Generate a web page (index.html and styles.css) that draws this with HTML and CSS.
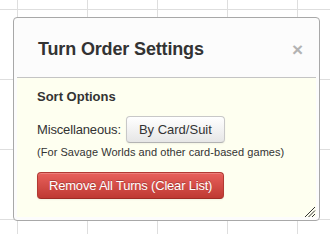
FILE: index.html
```html
<!DOCTYPE html>
<html>
<head>
<meta charset="utf-8">
<link rel="stylesheet" href="styles.css">
</head>
<body>
<div class="canvas">
  <div class="dialog">
    <div class="titlebar">
      <span class="title">Turn Order Settings</span>
      <span class="close">×</span>
    </div>
    <div class="content">
      <div class="section-title">Sort Options</div>
      <div class="row">
        <span class="label">Miscellaneous:</span>
        <button class="btn">By Card/Suit</button>
      </div>
      <div class="note">(For Savage Worlds and other card-based games)</div>
      <button class="btn btn-danger">Remove All Turns (Clear List)</button>
    </div>
    <svg class="grip" width="12" height="12" viewBox="0 0 12 12">
      <path d="M1 11 L11 1 M4.5 11 L11 4.5 M8 11 L11 8" stroke="#333" stroke-width="1" fill="none"/>
    </svg>
  </div>
</div>
</body>
</html>
```

FILE: styles.css
```css
html, body {
  margin: 0;
  padding: 0;
}
body {
  width: 330px;
  height: 234px;
  overflow: hidden;
  font-family: "Liberation Sans", Arial, sans-serif;
  background-color: #fff;
  background-image:
    linear-gradient(to right, #dedede 1px, transparent 1px),
    linear-gradient(to bottom, #dedede 1px, transparent 1px);
  background-size: 70px 70px;
  background-position: 17px 9px;
}
.canvas {
  position: relative;
  width: 330px;
  height: 234px;
}
.dialog {
  position: absolute;
  left: 13px;
  top: 17px;
  width: 307px;
  height: 204px;
  box-sizing: border-box;
  border: 1px solid #a8a8a8;
  border-radius: 4px;
  padding: 3px;
  background: #fcfcfc;
  display: flex;
  flex-direction: column;
}
.titlebar {
  height: 56px;
  border-bottom: 1px solid #c4c4c4;
  display: flex;
  align-items: center;
  justify-content: space-between;
  padding: 0 13px 0 21px;
  background: #fcfcfc;
}
.title {
  font-size: 18px;
  font-weight: bold;
  color: #333;
  letter-spacing: -0.15px;
}
.close {
  font-size: 19px;
  font-weight: bold;
  color: #b3b3b3;
  line-height: 20px;
  margin-top: 1px;
}
.content {
  flex: 1;
  background: #fefff0;
  padding: 10px 20px 0 20px;
  display: flex;
  flex-direction: column;
  align-items: flex-start;
}
.section-title {
  font-size: 13px;
  font-weight: bold;
  color: #333;
  line-height: 18px;
}
.row {
  margin-top: 10px;
  display: flex;
  align-items: center;
  gap: 5px;
}
.label {
  font-size: 13px;
  line-height: 18px;
  color: #333;
  letter-spacing: -0.15px;
}
.btn {
  font-family: "Liberation Sans", Arial, sans-serif;
  font-size: 13px;
  line-height: 19px;
  padding: 3px 12px;
  color: #333;
  border: 1px solid #c8c8c8;
  border-bottom-color: #b3b3b3;
  border-radius: 4px;
  background: linear-gradient(to bottom, #ffffff, #e6e6e6);
  box-shadow: inset 0 1px 0 rgba(255,255,255,0.2), 0 1px 2px rgba(0,0,0,0.05);
  cursor: pointer;
}
.note {
  margin-top: 2px;
  font-size: 11px;
  line-height: 15px;
  color: #333;
  letter-spacing: 0.05px;
}
.btn-danger {
  margin-top: 12px;
  color: #fff;
  padding: 3px 11px;
  letter-spacing: -0.2px;
  text-shadow: 0 -1px 0 rgba(0,0,0,0.25);
  background: linear-gradient(to bottom, #e8605b, #bf3a33);
  border: 1px solid #b23a33;
  border-bottom-color: #9f2c26;
}
.grip {
  position: absolute;
  right: 3px;
  bottom: 2px;
}
```
